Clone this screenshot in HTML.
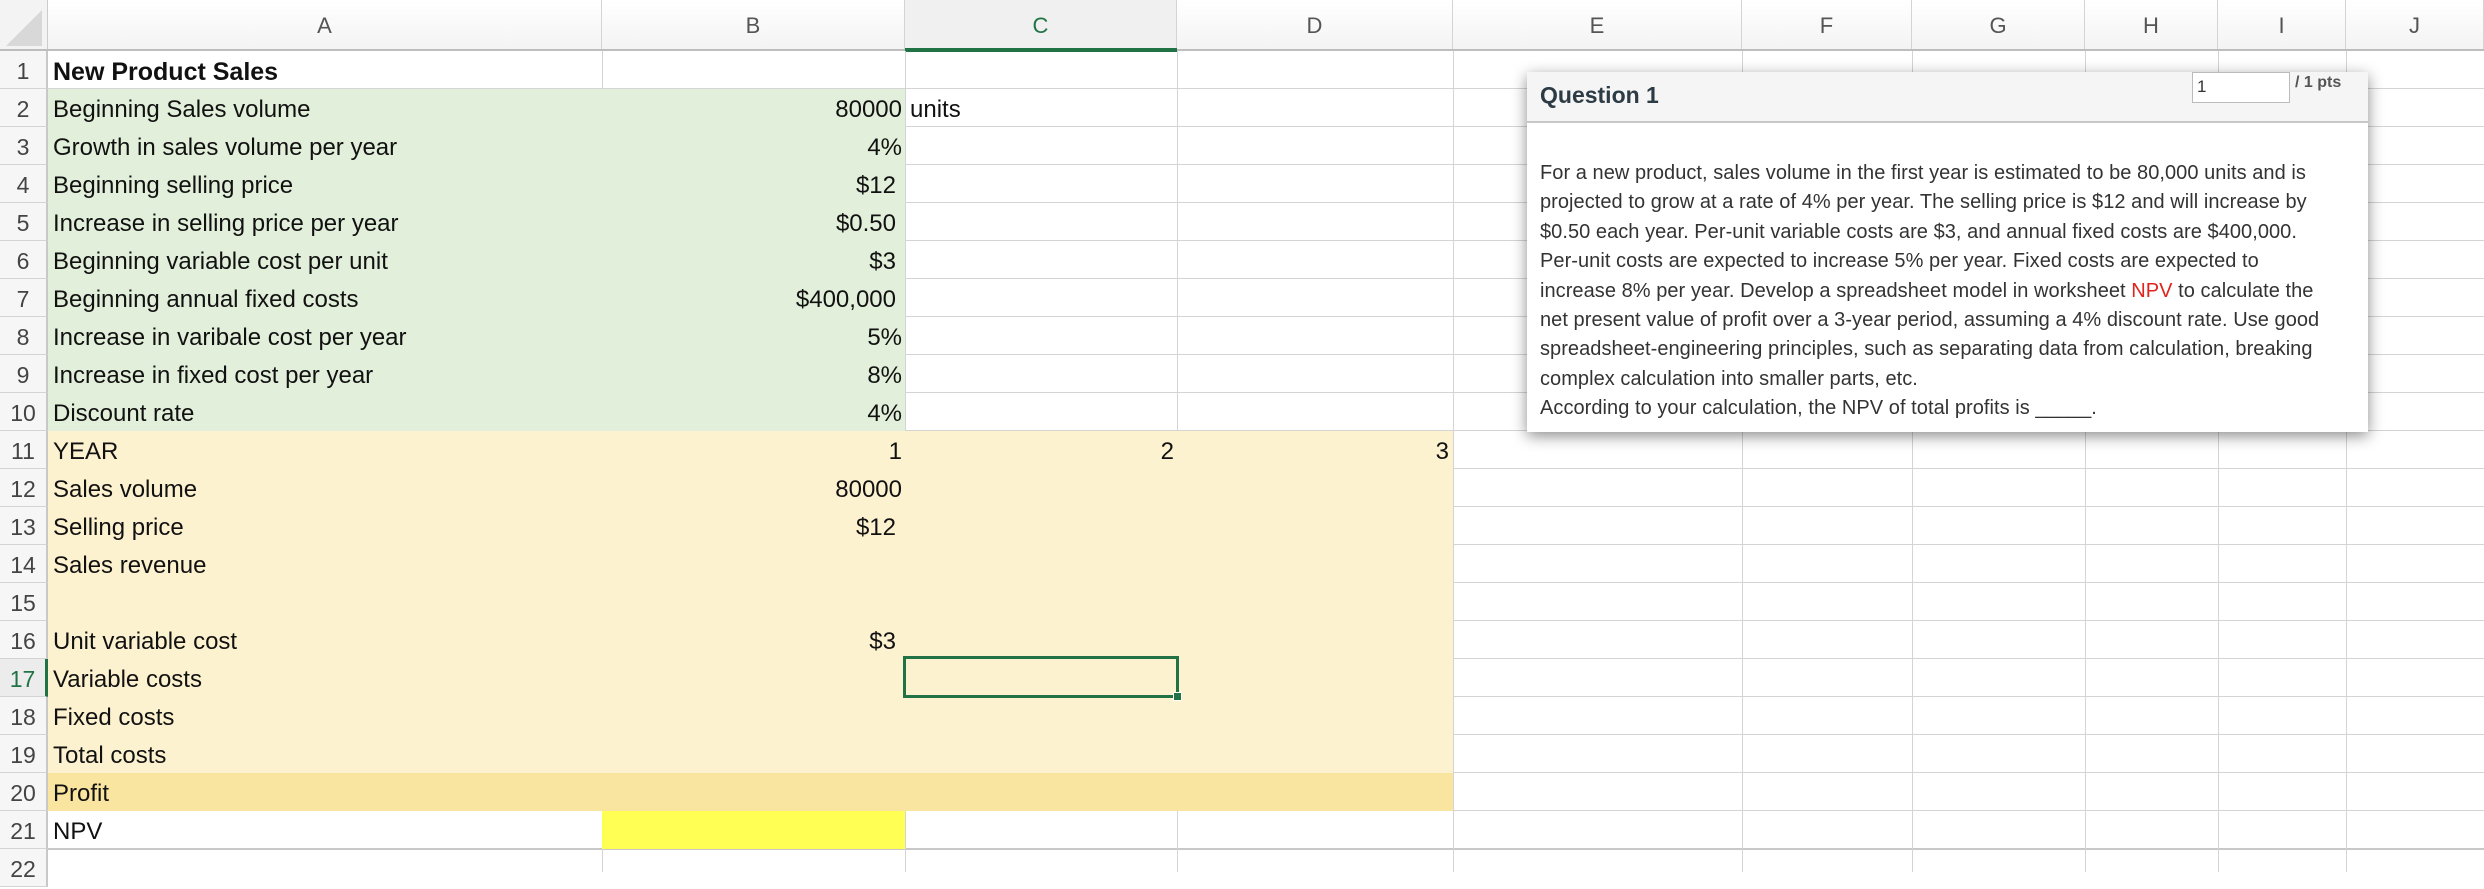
<!DOCTYPE html>
<html><head><meta charset="utf-8"><style>
*{margin:0;padding:0;box-sizing:border-box}
body{width:2484px;height:872px;overflow:hidden;background:#fff;position:relative;font-family:"Liberation Sans",sans-serif;}
.a{position:absolute}
.ch{position:absolute;top:0;height:51px;line-height:51px;text-align:center;font-size:22px;color:#555;background:linear-gradient(#fff,#f3f3f3);border-right:1px solid #d4d4d4}
.rh{position:absolute;left:0;width:48px;height:38px;line-height:40px;text-align:center;font-size:23px;color:#444;background:#f6f6f6;border-bottom:1px solid #d4d4d4;border-right:2px solid #c8c8c8}
.vl{position:absolute;top:51px;height:821px;width:1px;background:#d4d4d4}
.hl{position:absolute;left:48px;width:2436px;height:1px;background:#d4d4d4}
.t{position:absolute;font-size:24px;color:#111;height:38px;line-height:42px;white-space:nowrap}
.r{text-align:right}
.q{position:absolute;left:1540px;font-size:20px;letter-spacing:0.05px;color:#333;white-space:nowrap;font-family:"Liberation Sans",sans-serif}
</style></head><body>
<div class="a" style="left:0;top:0;width:48px;height:51px;background:#f3f3f3;border-right:1px solid #ccc"></div>
<svg class="a" style="left:4px;top:8px" width="40" height="40"><polygon points="38,2 38,38 2,38" fill="#d8d8d8"/></svg>
<div class="ch" style="left:48px;width:554px">A</div>
<div class="ch" style="left:602px;width:303px">B</div>
<div class="ch" style="left:905px;width:272px;background:#f0f0f0;color:#217346">C</div>
<div class="ch" style="left:1177px;width:276px">D</div>
<div class="ch" style="left:1453px;width:289px">E</div>
<div class="ch" style="left:1742px;width:170px">F</div>
<div class="ch" style="left:1912px;width:173px">G</div>
<div class="ch" style="left:2085px;width:133px">H</div>
<div class="ch" style="left:2218px;width:128px">I</div>
<div class="ch" style="left:2346px;width:138px">J</div>
<div class="a" style="left:0;top:49px;width:2484px;height:2px;background:#bdbdbd"></div>
<div class="a" style="left:905px;top:48px;width:272px;height:4px;background:#217346"></div>
<div class="hl" style="top:88px"></div><div class="hl" style="top:126px"></div><div class="hl" style="top:164px"></div><div class="hl" style="top:202px"></div><div class="hl" style="top:240px"></div><div class="hl" style="top:278px"></div><div class="hl" style="top:316px"></div><div class="hl" style="top:354px"></div><div class="hl" style="top:392px"></div><div class="hl" style="top:430px"></div><div class="hl" style="top:468px"></div><div class="hl" style="top:506px"></div><div class="hl" style="top:544px"></div><div class="hl" style="top:582px"></div><div class="hl" style="top:620px"></div><div class="hl" style="top:658px"></div><div class="hl" style="top:696px"></div><div class="hl" style="top:734px"></div><div class="hl" style="top:772px"></div><div class="hl" style="top:810px"></div><div class="hl" style="top:848px;height:2px;background:#c8c8c8"></div>
<div class="vl" style="left:602px"></div><div class="vl" style="left:905px"></div><div class="vl" style="left:1177px"></div><div class="vl" style="left:1453px"></div><div class="vl" style="left:1742px"></div><div class="vl" style="left:1912px"></div><div class="vl" style="left:2085px"></div><div class="vl" style="left:2218px"></div><div class="vl" style="left:2346px"></div>
<div class="a" style="left:48px;top:89px;width:857px;height:342px;background:#e2efda"></div>
<div class="a" style="left:48px;top:431px;width:1405px;height:342px;background:#fdf2d0"></div>
<div class="a" style="left:48px;top:773px;width:1405px;height:38px;background:#fae5a0"></div>
<div class="a" style="left:602px;top:811px;width:303px;height:38px;background:#ffff54"></div>
<div class="rh" style="top:51px">1</div><div class="rh" style="top:89px">2</div><div class="rh" style="top:127px">3</div><div class="rh" style="top:165px">4</div><div class="rh" style="top:203px">5</div><div class="rh" style="top:241px">6</div><div class="rh" style="top:279px">7</div><div class="rh" style="top:317px">8</div><div class="rh" style="top:355px">9</div><div class="rh" style="top:393px">10</div><div class="rh" style="top:431px">11</div><div class="rh" style="top:469px">12</div><div class="rh" style="top:507px">13</div><div class="rh" style="top:545px">14</div><div class="rh" style="top:583px">15</div><div class="rh" style="top:621px">16</div>
<div class="rh" style="top:659px;color:#217346;background:#ececec;border-right:3px solid #217346">17</div>
<div class="rh" style="top:697px">18</div><div class="rh" style="top:735px">19</div><div class="rh" style="top:773px">20</div><div class="rh" style="top:811px">21</div><div class="rh" style="top:849px">22</div>
<div class="t" style="left:53px;top:51px;font-weight:bold;font-size:25px">New Product Sales</div>
<div class="t" style="left:53px;top:89px">Beginning Sales volume</div>
<div class="t" style="left:53px;top:127px">Growth in sales volume per year</div>
<div class="t" style="left:53px;top:165px">Beginning selling price</div>
<div class="t" style="left:53px;top:203px">Increase in selling price per year</div>
<div class="t" style="left:53px;top:241px">Beginning variable cost per unit</div>
<div class="t" style="left:53px;top:279px">Beginning annual fixed costs</div>
<div class="t" style="left:53px;top:317px">Increase in varibale cost per year</div>
<div class="t" style="left:53px;top:355px">Increase in fixed cost per year</div>
<div class="t" style="left:53px;top:393px">Discount rate</div>
<div class="t" style="left:53px;top:431px">YEAR</div>
<div class="t" style="left:53px;top:469px">Sales volume</div>
<div class="t" style="left:53px;top:507px">Selling price</div>
<div class="t" style="left:53px;top:545px">Sales revenue</div>
<div class="t" style="left:53px;top:621px">Unit variable cost</div>
<div class="t" style="left:53px;top:659px">Variable costs</div>
<div class="t" style="left:53px;top:697px">Fixed costs</div>
<div class="t" style="left:53px;top:735px">Total costs</div>
<div class="t" style="left:53px;top:773px">Profit</div>
<div class="t" style="left:53px;top:811px">NPV</div>
<div class="t r" style="left:602px;width:300px;top:89px">80000</div>
<div class="t" style="left:910px;top:89px">units</div>
<div class="t r" style="left:602px;width:300px;top:127px">4%</div>
<div class="t r" style="left:602px;width:294px;top:165px">$12</div>
<div class="t r" style="left:602px;width:294px;top:203px">$0.50</div>
<div class="t r" style="left:602px;width:294px;top:241px">$3</div>
<div class="t r" style="left:602px;width:294px;top:279px">$400,000</div>
<div class="t r" style="left:602px;width:300px;top:317px">5%</div>
<div class="t r" style="left:602px;width:300px;top:355px">8%</div>
<div class="t r" style="left:602px;width:300px;top:393px">4%</div>
<div class="t r" style="left:602px;width:300px;top:431px">1</div>
<div class="t r" style="left:905px;width:269px;top:431px">2</div>
<div class="t r" style="left:1177px;width:272px;top:431px">3</div>
<div class="t r" style="left:602px;width:300px;top:469px">80000</div>
<div class="t r" style="left:602px;width:294px;top:507px">$12</div>
<div class="t r" style="left:602px;width:294px;top:621px">$3</div>
<div class="a" style="left:903px;top:656px;width:276px;height:42px;border:3px solid #217346"></div>
<div class="a" style="left:1173px;top:692px;width:9px;height:9px;background:#217346;border:1px solid #fff"></div>
<div class="a" style="left:1527px;top:72px;width:841px;height:360px;background:#fff;box-shadow:0 4px 14px rgba(0,0,0,0.45)"></div>
<div class="a" style="left:1527px;top:72px;width:841px;height:51px;background:#f5f5f5;border-bottom:2px solid #c7c7c7"></div>
<div class="q" style="top:80px;font-size:23px;font-weight:bold;letter-spacing:0;line-height:30px;color:#2d3b45">Question 1</div>
<div class="a" style="left:2192px;top:72px;width:98px;height:31px;background:#fff;border:1px solid #bbb;font-size:17px;line-height:28px;padding-left:4px;color:#333">1</div>
<div class="a" style="left:2295px;top:74px;font-size:16px;font-weight:bold;color:#555">/ 1 pts</div>
<div class="q" style="top:162px">For a new product, sales volume in the first year is estimated to be 80,000 units and is</div>
<div class="q" style="top:191px">projected to grow at a rate of 4% per year. The selling price is $12 and will increase by</div>
<div class="q" style="top:221px">$0.50 each year. Per-unit variable costs are $3, and annual fixed costs are $400,000.</div>
<div class="q" style="top:250px">Per-unit costs are expected to increase 5% per year. Fixed costs are expected to</div>
<div class="q" style="top:280px">increase 8% per year. Develop a spreadsheet model in worksheet <span style="color:#e0231c">NPV</span> to calculate the</div>
<div class="q" style="top:309px">net present value of profit over a 3-year period, assuming a 4% discount rate. Use good</div>
<div class="q" style="top:338px">spreadsheet-engineering principles, such as separating data from calculation, breaking</div>
<div class="q" style="top:368px">complex calculation into smaller parts, etc.</div>
<div class="q" style="top:397px">According to your calculation, the NPV of total profits is _____.</div>
</body></html>
